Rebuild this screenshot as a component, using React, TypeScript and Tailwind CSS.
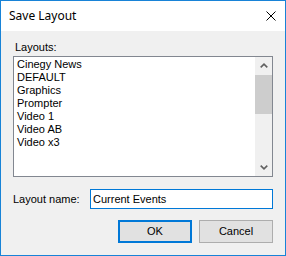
import React from "react";

const layouts = ["Cinegy News", "DEFAULT", "Graphics", "Prompter", "Video 1", "Video AB", "Video x3"];

function Chevron({ down }: { down?: boolean }) {
    return (
        <svg width="8" height="5" viewBox="0 0 8 5" className={down ? "rotate-180" : ""}>
            <polyline points="0.7,4.3 4,1.2 7.3,4.3" fill="none" stroke="#606060" strokeWidth="1.6" />
        </svg>
    );
}

export default function App() {
    return (
        <div className="w-[286px] h-[256px] flex flex-col border border-[#1883d7] bg-[#f0f0f0] font-['Liberation_Sans',Arial,sans-serif] text-[11px] text-black">
            <div className="h-[30px] flex items-center justify-between bg-white pl-[8px] pr-[9px]">
                <span className="font-['Noto_Sans','Open_Sans',sans-serif] text-[12px] leading-none">Save Layout</span>
                <svg width="10" height="10" viewBox="0 0 10 10">
                    <path d="M0.5 0.5 L9.5 9.5 M9.5 0.5 L0.5 9.5" stroke="#000" strokeWidth="1" />
                </svg>
            </div>
            <div className="flex flex-col px-[12px] pt-[10px]">
                <span className="pl-[2px] leading-[13px]">Layouts:</span>
                <div className="mt-[2px] h-[121px] flex border border-[#828790] bg-white">
                    <ul className="flex-1 pt-[1px] pl-[3px]">
                        {layouts.map((name) => (
                            <li key={name} className="h-[13px] leading-[13px]">{name}</li>
                        ))}
                    </ul>
                    <div className="w-[17px] flex flex-col bg-[#f0f0f0]">
                        <div className="h-[17px] flex items-center justify-center"><Chevron /></div>
                        <div className="mt-[1px] h-[39px] bg-[#cdcdcd]"></div>
                        <div className="flex-1"></div>
                        <div className="h-[17px] flex items-center justify-center"><Chevron down /></div>
                    </div>
                </div>
                <div className="mt-[12px] h-[20px] flex items-center">
                    <span className="w-[77px]">Layout name:</span>
                    <div className="flex-1 h-full flex items-center border border-[#0078d7] bg-white pl-[2px]">Current Events</div>
                </div>
                <div className="mt-[11px] flex justify-end gap-[7px]">
                    <button className="w-[74px] h-[23px] border-2 border-[#0078d7] bg-[#e1e1e1]">OK</button>
                    <button className="w-[74px] h-[23px] border border-[#adadad] bg-[#e1e1e1]">Cancel</button>
                </div>
            </div>
        </div>
    );
}
